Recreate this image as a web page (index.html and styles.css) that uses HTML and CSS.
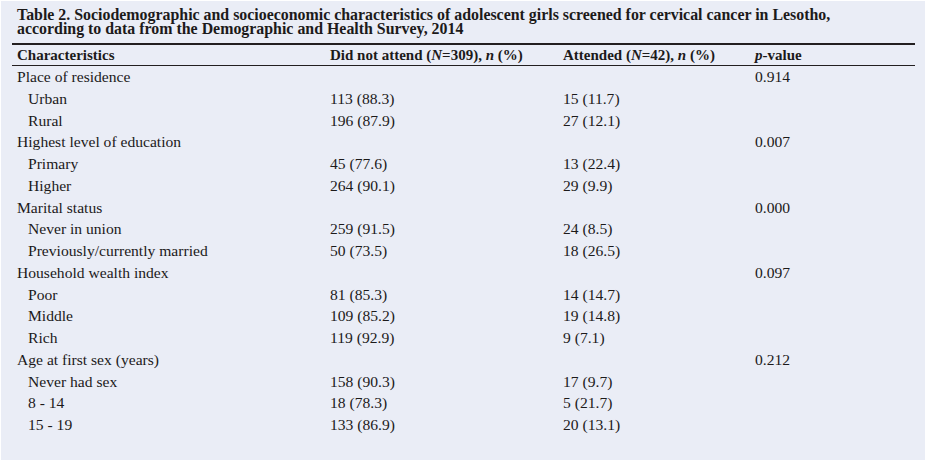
FILE: index.html
```html
<!DOCTYPE html>
<html>
<head>
<meta charset="utf-8">
<link rel="stylesheet" href="styles.css">
</head>
<body>
<div class="panel">
  <div class="caption">Table 2. Sociodemographic and socioeconomic characteristics of adolescent girls screened for cervical cancer in Lesotho,<br>according to data from the Demographic and Health Survey, 2014</div>
  <div class="table">
    <div class="row head">
      <div>Characteristics</div>
      <div>Did not attend (<i>N</i>=309), <i>n</i> (%)</div>
      <div>Attended (<i>N</i>=42), <i>n</i> (%)</div>
      <div><i>p</i>-value</div>
    </div>
    <div class="body">
      <div class="row"><div>Place of residence</div><div></div><div></div><div>0.914</div></div>
      <div class="row sub"><div>Urban</div><div>113 (88.3)</div><div>15 (11.7)</div><div></div></div>
      <div class="row sub"><div>Rural</div><div>196 (87.9)</div><div>27 (12.1)</div><div></div></div>
      <div class="row"><div>Highest level of education</div><div></div><div></div><div>0.007</div></div>
      <div class="row sub"><div>Primary</div><div>45 (77.6)</div><div>13 (22.4)</div><div></div></div>
      <div class="row sub"><div>Higher</div><div>264 (90.1)</div><div>29 (9.9)</div><div></div></div>
      <div class="row"><div>Marital status</div><div></div><div></div><div>0.000</div></div>
      <div class="row sub"><div>Never in union</div><div>259 (91.5)</div><div>24 (8.5)</div><div></div></div>
      <div class="row sub"><div>Previously/currently married</div><div>50 (73.5)</div><div>18 (26.5)</div><div></div></div>
      <div class="row"><div>Household wealth index</div><div></div><div></div><div>0.097</div></div>
      <div class="row sub"><div>Poor</div><div>81 (85.3)</div><div>14 (14.7)</div><div></div></div>
      <div class="row sub"><div>Middle</div><div>109 (85.2)</div><div>19 (14.8)</div><div></div></div>
      <div class="row sub"><div>Rich</div><div>119 (92.9)</div><div>9 (7.1)</div><div></div></div>
      <div class="row"><div>Age at first sex (years)</div><div></div><div></div><div>0.212</div></div>
      <div class="row sub"><div>Never had sex</div><div>158 (90.3)</div><div>17 (9.7)</div><div></div></div>
      <div class="row sub"><div>8 - 14</div><div>18 (78.3)</div><div>5 (21.7)</div><div></div></div>
      <div class="row sub"><div>15 - 19</div><div>133 (86.9)</div><div>20 (13.1)</div><div></div></div>
    </div>
  </div>
</div>
</body>
</html>
```
FILE: styles.css
```css
html { background: #ffffff; }
body {
  margin: 0;
  font-family: "Liberation Serif", "Times New Roman", serif;
  color: #1c1a1a;
}
.panel {
  margin: 1px 0 0 1px;
  width: 924px;
  height: 459px;
  background: #eaedf6;
  padding: 7px 10px 0 11px;
  box-sizing: border-box;
}
.caption {
  font-weight: bold;
  font-size: 15.9px;
  line-height: 14px;
  padding-left: 5px;
  padding-bottom: 7px;
}
.table {
  border-top: 2px solid #231f20;
}
.row {
  display: grid;
  grid-template-columns: 313px 233px 192px 1fr;
  font-size: 15.6px;
  height: 21.75px;
  line-height: 22.5px;
  padding-left: 5px;
}
.row.head {
  height: 20px;
  line-height: 21px;
  font-size: 15px;
  border-bottom: 1px solid #231f20;
  font-weight: bold;
}
.row.sub > div:first-child { padding-left: 11px; }
```
